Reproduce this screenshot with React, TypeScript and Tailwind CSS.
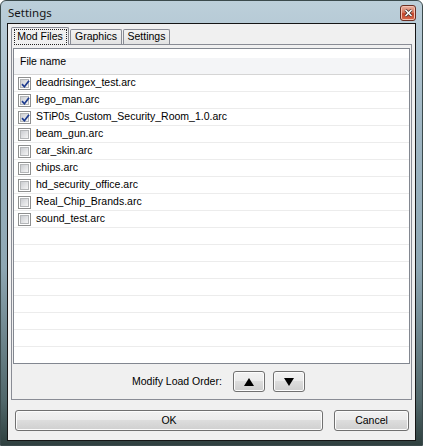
import React from 'react'

const files = [
  { name: 'deadrisingex_test.arc', checked: true },
  { name: 'lego_man.arc', checked: true },
  { name: 'STiP0s_Custom_Security_Room_1.0.arc', checked: true },
  { name: 'beam_gun.arc', checked: false },
  { name: 'car_skin.arc', checked: false },
  { name: 'chips.arc', checked: false },
  { name: 'hd_security_office.arc', checked: false },
  { name: 'Real_Chip_Brands.arc', checked: false },
  { name: 'sound_test.arc', checked: false },
]

const EMPTY_ROWS = 8

function CheckBox({ checked }: { checked: boolean }) {
  return (
    <div className="w-[13px] h-[13px] border border-[#8e8f8f] bg-white p-px shrink-0">
      <div className="relative w-full h-full border border-[#b4b6b8] bg-[linear-gradient(135deg,#cbcdd1_0%,#e2e3e5_55%,#f5f5f5_100%)]">
        {checked && (
          <svg className="absolute -left-[2px] -top-[2px]" width="13" height="13" viewBox="0 0 13 13">
            <path d="M3 6.2 L5.4 8.8 L10 2.8" fill="none" stroke="#1d3b8e" strokeWidth="1.7" />
          </svg>
        )}
      </div>
    </div>
  )
}

function WinButton({ className, children }: { className?: string; children?: React.ReactNode }) {
  return (
    <div
      className={
        'border border-[#707070] rounded-[3px] bg-[linear-gradient(to_bottom,#f2f2f2_0%,#ebebeb_48%,#dddddd_50%,#cfcfcf_100%)] shadow-[inset_0_0_0_1px_#fcfcfc] flex items-center justify-center text-black ' +
        (className ?? '')
      }
    >
      {children}
    </div>
  )
}

export default function App() {
  return (
    <div className="w-[423px] h-[446px] flex flex-col border border-[#3b4a4c] rounded-t-[6px] bg-[linear-gradient(to_bottom,#bccfda_0%,#9fb6c3_30%,#8ea7b3_60%,#51676a_90%,#2f403f_100%)] font-['Liberation_Sans',Arial,sans-serif] text-[10.5px]">
      {/* Title bar */}
      <div className="h-[22px] flex items-start pl-[7px] pr-[6px] shrink-0">
        <span className="mt-[3px] font-['Noto_Sans',sans-serif] text-[11.5px] text-[#151515]">Settings</span>
        <div className="ml-auto mt-[4px] w-[16px] h-[16px] rounded-[3px] border border-[#6b2e22] bg-[linear-gradient(to_bottom,#eab3a4_0%,#d8785f_45%,#c5452c_55%,#d86a4c_100%)] shadow-[inset_0_0_0_1px_#f3c2b4] flex items-center justify-center">
          <svg width="9" height="8" viewBox="0 0 9 8">
            <path d="M1.5 1 L7.5 7 M7.5 1 L1.5 7" stroke="#3a2a28" strokeWidth="3" />
            <path d="M1.5 1 L7.5 7 M7.5 1 L1.5 7" stroke="#ffffff" strokeWidth="1.6" />
          </svg>
        </div>
      </div>

      {/* Client area */}
      <div className="mx-[6px] border border-[#151515] bg-[#f0f0f0] flex flex-col h-[418px] shrink-0">
        {/* Tabs */}
        <div className="mt-[3px] ml-[3px] h-[17px] flex items-end">
          <div className="relative z-10 -mb-px h-[18px] w-[58px] border border-b-0 border-[#898c95] rounded-t-[2px] bg-[#f0f0f0] flex items-start justify-center pt-[1px]">
            <div className="h-[16px] w-[53px] border border-dotted border-[#222] flex items-center justify-center">
              Mod Files
            </div>
          </div>
          <div className="h-[15px] w-[52px] ml-px border border-b-0 border-[#898c95] rounded-t-[2px] bg-[linear-gradient(to_bottom,#f3f3f3,#e3e3e3)] flex items-center justify-center">
            Graphics
          </div>
          <div className="h-[15px] w-[47px] ml-px border border-b-0 border-[#898c95] rounded-t-[2px] bg-[linear-gradient(to_bottom,#f3f3f3,#e3e3e3)] flex items-center justify-center">
            Settings
          </div>
        </div>

        {/* Tab page */}
        <div className="mx-[3px] h-[356px] border border-[#898c95] bg-[#f0f0f0] flex flex-col">
          {/* List view */}
          <div className="mt-[3px] mx-px h-[316px] border border-[#828790] bg-white flex flex-col overflow-hidden">
            <div className="h-[26px] shrink-0 flex items-center pl-[6px] border-b border-[#d5d5d5] bg-[linear-gradient(to_bottom,#ffffff_0%,#ffffff_36%,#f4f5f7_36%,#f4f5f7_100%)]">
              File name
            </div>
            {files.map((f) => (
              <div key={f.name} className="h-[17px] shrink-0 flex items-center pl-[4px] border-b border-[#ececec]">
                <CheckBox checked={f.checked} />
                <span className="ml-[5px] text-black">{f.name}</span>
              </div>
            ))}
            {Array.from({ length: EMPTY_ROWS }).map((_, i) => (
              <div key={i} className="h-[17px] shrink-0 border-b border-[#ececec]" />
            ))}
          </div>

          {/* Load order */}
          <div className="flex-1 flex items-center pl-[120px]">
            <span className="text-black">Modify Load Order:</span>
            <WinButton className="ml-[11px] w-[32px] h-[21px]">
              <svg width="10" height="8" viewBox="0 0 10 8">
                <polygon points="5,0 10,8 0,8" fill="#000" />
              </svg>
            </WinButton>
            <WinButton className="ml-[8px] w-[32px] h-[21px]">
              <svg width="10" height="8" viewBox="0 0 10 8">
                <polygon points="0,0 10,0 5,8" fill="#000" />
              </svg>
            </WinButton>
          </div>
        </div>

        {/* Dialog buttons */}
        <div className="mt-[10px] flex pl-[7px] pr-[6px]">
          <WinButton className="w-[308px] h-[21px]">OK</WinButton>
          <WinButton className="ml-auto w-[75px] h-[21px]">Cancel</WinButton>
        </div>
      </div>
    </div>
  )
}
